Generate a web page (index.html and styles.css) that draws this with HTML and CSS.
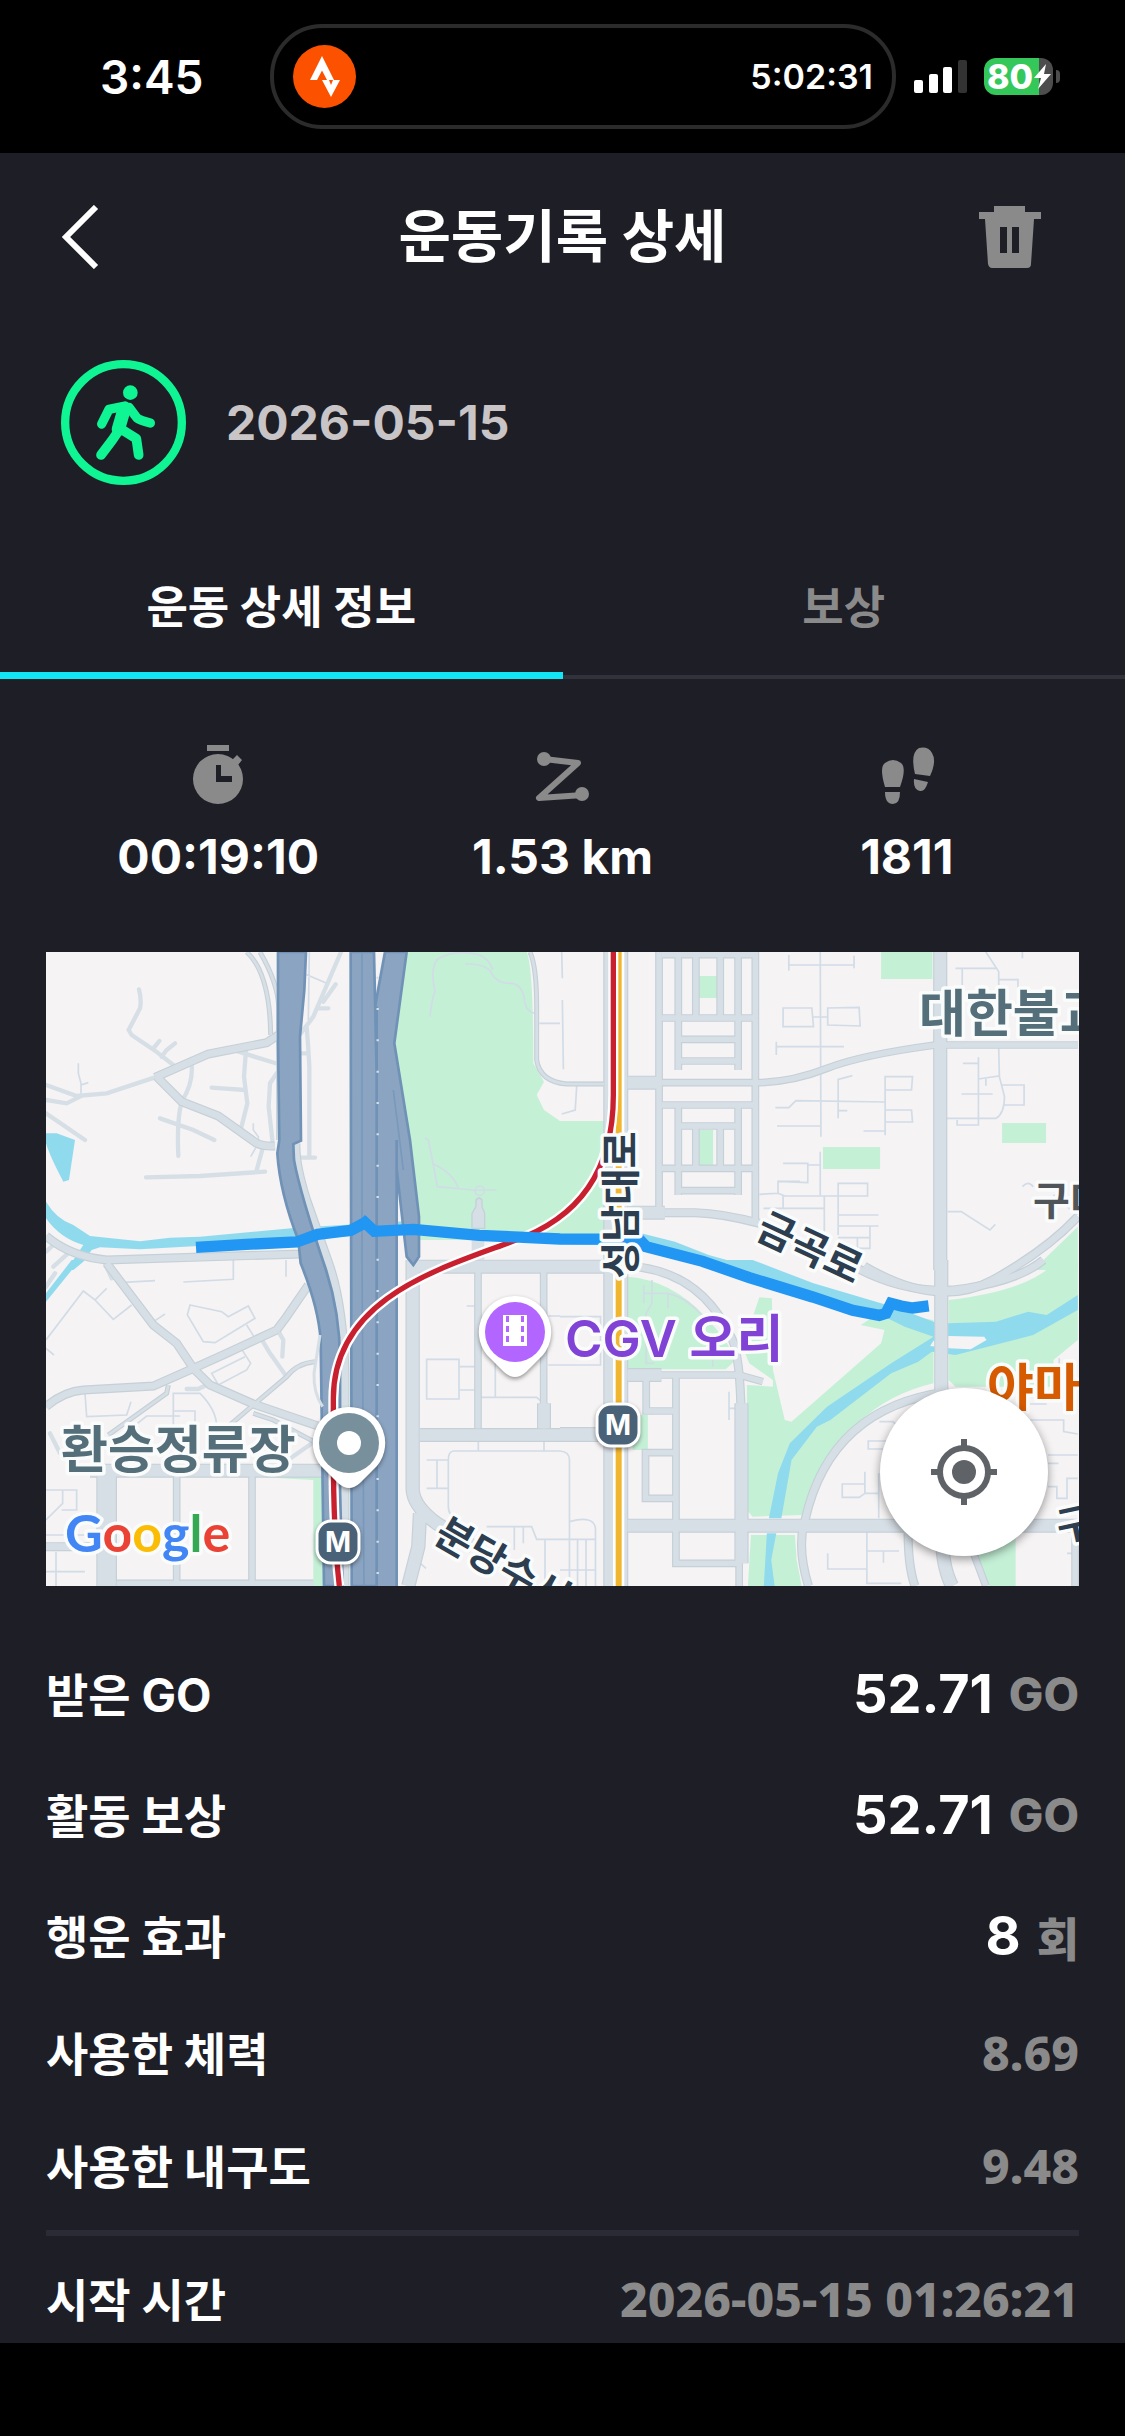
FILE: index.html
```html
<!DOCTYPE html>
<html lang="ko">
<head>
<meta charset="utf-8">
<meta name="viewport" content="width=device-width, initial-scale=1">
<title>운동기록 상세</title>
<link rel="stylesheet" href="styles.css">
</head>
<body>
<div class="status">
  <span class="clock">3:45</span>
  <div class="island">
    <svg class="strava" viewBox="0 0 63 63" aria-hidden="true"><circle cx="31.500" cy="31.500" r="31.500" fill="#fc5200"/><path d="M29 11 41 35H34L29 25.500 24 35H17ZM29 35h7l2 5 2-5h7L38 52Z" fill="#fff"/></svg>
    <span class="timer">5:02:31</span>
  </div>
  <svg class="signal" viewBox="0 0 54 34" aria-hidden="true"><g fill="#fff"><rect y="20" width="9" height="13" rx="2"/><rect x="15" y="14" width="9" height="19" rx="2"/><rect x="29" y="7" width="9" height="26" rx="2"/></g><rect x="44" width="9" height="33" rx="2" fill="#333"/></svg>
  <div class="battery">
    <span class="level">80</span>
    <svg class="bolt" viewBox="0 0 17 25" aria-hidden="true"><path d="M12 0 0 14H7L4 25 17 10H10Z" fill="#fff"/></svg>
  </div>
</div>

<main class="app">
  <header class="bar">
    <button class="icon-btn" type="button" aria-label="뒤로"><svg width="38" height="64" viewBox="0 0 38 64"><path d="M35 2 5 32 35 62" fill="none" stroke="#fff" stroke-width="6"/></svg></button>
    <h1 class="title">운동기록 상세</h1>
    <button class="icon-btn icon-end" type="button" aria-label="삭제"><svg width="62" height="62" viewBox="0 0 62 62"><path fill="#8a8a8a" fill-rule="evenodd" d="M15 0H46V6H62V13H55L52 58Q52 62 48 62H13Q10 62 9 58L6 13H0V6H15ZM21 21V47H28V21ZM33 21V47H40V21Z"/></svg></button>
  </header>

  <section class="activity">
    <svg width="125" height="125" viewBox="0 0 375 375" aria-hidden="true">
      <circle cx="187.500" cy="187.500" r="175" fill="none" stroke="#0ff594" stroke-width="25"/>
      <circle cx="208" cy="98" r="22" fill="#0ff594"/>
      <g fill="none" stroke="#0ff594" stroke-linecap="round" stroke-linejoin="round"><path d="M122 192 144 148 192 138M204 142 228 174Q236 181 268 189" stroke-width="28"/><path d="M190 146 172 208" stroke-width="40"/><path d="M176 208 154 240 120 285" stroke-width="29"/><path d="M178 206 226 236 233 285" stroke-width="29"/></g>
    </svg>
    <time class="date" datetime="2026-05-15">2026-05-15</time>
  </section>

  <nav class="tabs">
    <button class="tab tab-on" type="button">운동 상세 정보</button>
    <button class="tab" type="button">보상</button>
  </nav>

  <section class="stats">
    <div class="stat">
      <svg width="60" height="60" viewBox="0 0 60 60" aria-hidden="true"><g fill="#8a8a8a"><path d="M19 0H41V6H19ZM44 15 49 10 54 15 50 20Z"/><path fill-rule="evenodd" d="M30 9A25 25 0 1 1 30 59A25 25 0 1 1 30 9ZM28 20V37H44V31H33V20Z"/></g></svg>
      <span class="stat-value">00:19:10</span>
    </div>
    <div class="stat">
      <svg width="60" height="60" viewBox="0 0 60 60" aria-hidden="true"><g fill="none" stroke="#8a8a8a" stroke-width="6" stroke-linejoin="round"><path d="M12 14 46 18 7 53 51 50"/></g><circle cx="12" cy="14" r="7" fill="#8a8a8a"/><circle cx="50" cy="49" r="7" fill="#8a8a8a"/></svg>
      <span class="stat-value">1.53 km</span>
    </div>
    <div class="stat">
      <svg width="60" height="60" viewBox="0 0 60 60" aria-hidden="true"><g fill="#8a8a8a"><path d="M8 42Q2 22 8 18 16 12 24 18 30 23 23 42ZM8 47H23Q23 59 16 59 8 59 8 47ZM38 29Q33 8 42 3 51 1 55 8 60 16 53 31ZM37 34 51 37Q48 47 43 46 36 45 37 34Z"/></g></svg>
      <span class="stat-value">1811</span>
    </div>
  </section>

  <section class="map" aria-label="운동 경로">
    <svg class="map-art" viewBox="0 0 1033 634">
      <defs>
        <g id="wide-roads">
          <g transform="translate(-18 -36)">
            <path d="M345 412 505 342 680 308 715 285M350 410 425 485 535 528 650 610Q670 620 705 618M18 888Q90 950 200 960L780 942 795 925" class="w22"/>
            <path d="M620 36Q690 100 692 285M660 36Q714 130 716 200V600" class="w12"/><path d="M768 610Q765 670 800 780L870 980Q910 1100 915 1300V1938" class="w22"/>
            <path d="M1470 36Q1490 80 1490 200V360Q1500 425 1580 432H1692" class="w12"/>
          </g>
          <g transform="translate(-18 924)">
            <path d="M200 10 340 195 410 250 460 325 510 375 640 432 840 500M18 440Q70 395 130 390L340 378 460 325 560 280 710 210M710 210 740 170 805 75M18 860H190" class="w22"/>
            <path d="M150 632H850" class="w36"/><path d="M200 640V978" class="w50"/><path d="M410 640V978M636 640V978M230 970H820" class="w18"/>
            <path d="M1118 0V690Q1122 740 1190 790L1300 860M1140 760 1135 860 1105 978" class="w28"/><path d="M1105 20H1700M1140 525H1700" class="w36"/><path d="M1314 30V505M1511 30V505" class="w18"/><path d="M1512 430V505" class="w36"/>
            <path d="M205 525 380 400 385 375M540 520 740 350Q770 310 825 305M640 460 700 480 850 560" class="w12"/>
          </g>
          <g transform="translate(1542 -36) scale(1.014 1)">
            <path d="M293 36V820M578 36V850" class="w18"/><path d="M165 36V990" class="w70"/>
            <path d="M1125 36V990" class="w36"/><path d="M300 44H580M300 234H580M350 44V390M527 44V390M350 363H527M350 298H527M402 44V230M474 44V230M300 428H590Q690 425 790 385T1110 315H1532M300 495H578M350 495V765M527 495V765M350 558H527M402 560V685M474 560V685M300 685H578M350 752H527" class="w18"/>
            <path d="M200 428H300M200 818H310" class="w36"/><path d="M310 818H400Q480 820 590 850M900 978Q1120 1110 1280 1020T1532 830" class="w22"/>
          </g>
          <g transform="translate(1542 924) scale(1.014 1)">
            <path d="M165 0V978" class="w70"/><path d="M0 22H240Q420 50 500 220 530 260 535 430M880 25Q1040 110 1200 85T1430 0M1150 395Q800 440 725 780 700 860 735 978M1030 820Q1030 920 1050 978" class="w22"/>
            <path d="M1128 0V400M537 430V910M200 797H1532M0 522H130M200 345H300M1130 820Q1130 920 1160 978" class="w36"/>
            <path d="M200 345H530L600 365M343 345V910H530V978M255 345V453H343M343 578H253V715H343M1524 820V978M1220 870 1260 978" class="w18"/>
          </g>
        </g>
      </defs>
      <rect width="1033" height="634" fill="#f5f3f4"/>
      <g class="third">
        <g class="green">
          <path transform="translate(-18 -36)" d="M1100 36H1460Q1480 80 1480 370L1512 425 1490 465 1512 510 1560 543H1692V900H1140L1120 660 1065 320Z"/>
          <path transform="translate(-18 924)" d="M645 650H850V978H820V660Z"/>
          <path transform="translate(1542 -36) scale(1.014 1)" d="M407 108H468V174H407ZM410 570H453V675H410ZM950 36H1102V117H950ZM778 621H947V687H778ZM1308 549H1438V609H1308ZM1532 860 1400 990H1532Z"/>
          <path transform="translate(1542 924) scale(1.014 1)" d="M200 50Q330 60 430 170T510 310L490 328H200ZM215 465H260V570H215ZM590 112 627 115 630 330 665 480 685 485 950 250 960 210 890 195 950 155 1105 180V370Q850 430 740 710L715 765 570 770 553 750V375L630 380V360L560 310 540 260ZM1150 120Q1400 90 1470 0H1532V240L1460 300V380H1170L1150 360ZM565 825H695L700 900 715 978H556ZM1230 870 1348 830V978H1270Z"/>
        </g>
        <g class="water">
          <path transform="translate(-18 -36)" d="M18 580 50 580 105 600 87 720 70 725Q30 650 18 610ZM18 785Q50 838 100 855L150 888 300 904 390 893 480 890 770 863 1120 842V875L700 905 300 928 180 922 155 930 130 965 100 990H80L120 930 130 915Q60 895 18 835Z"/>
          <path transform="translate(-18 924)" d="M95 0H120L18 125V100Z"/>
          <path transform="translate(1542 -36) scale(1.014 1)" d="M240 880 340 905 440 945 620 995H480L240 910Z"/>
          <path transform="translate(1542 924) scale(1.014 1)" d="M440 0H570L750 70 1000 145 1105 185 1150 190 1290 185 1385 155 1440 165 1532 105V150L1400 225 1170 285 1100 275 1060 305 980 340 800 480 760 500 685 600 655 775H618L645 640 680 550 790 440 980 310 1105 230 1020 200 930 155ZM612 820H640L625 900 635 978H603Z"/>
          <path transform="translate(1542 924) scale(1.014 1)" d="M1150 228 1255 230 1262 240 1215 268 1150 265 1095 258 1105 242Z" fill="#f5f3f4"/>
        </g>
        <g fill="none" stroke="#d1dce6" stroke-width="5">
          <g transform="translate(-18 -36)"><path d="M115 370V400L123 430V465M123 435 145 428M580 960V1018L430 1026M738 960V1010M790 100 860 130M808 36 805 240M1170 230Q1175 180 1185 155 1170 90 1190 60 1240 25 1320 45 1350 60 1358 90M1275 72Q1340 70 1355 100 1370 130 1410 130 1450 130 1455 190 1460 215 1490 222M1498 250H1560M1155 594 1165 600 1180 675 1192 740 1300 750H1370M1180 672Q1240 700 1255 745M640 550V570L655 590V610L632 650"/><circle cx="1319" cy="752" r="14"/></g>
          <path transform="translate(-18 924)" d="M18 240 130 93 165 120 200 85M165 120 220 178 275 135M250 67 345 62M18 265 42 285M345 182 375 162M450 135 545 155 565 170 625 138 645 175 525 248 490 245 442 165ZM600 260 632 310 620 330 535 375 515 340 615 290M620 195 645 235M135 400 140 470 260 465 273 425M400 520V400H480Q530 450 530 500M400 453H465V490M280 500 320 468H420M18 690H110V750H65M68 690V730L18 780M18 825H165M48 875V978M18 935H135M1160 298H1257V417H1160ZM1257 320H1305M1257 390H1305M1366 300V410M1314 412H1490L1505 425M1160 600H1225M1191 600V685M1160 685H1225M1560 573H1240Q1225 575 1225 600V740Q1225 770 1260 780M1315 540V573M1512 540V573M1340 800H1475L1490 838H1560M1423 800V870M1450 800V850M1515 838V978M1135 905 1158 925M1280 138H1305M1525 168H1560M1525 315H1560"/>
          <path transform="translate(1542 -36) scale(1.014 1)" d="M5 36 7 115M7 180 10 388M0 428H130M50 430 45 510 5 522M677 45V92M677 75H870M870 47V85M770 36 772 590M640 305V345M640 320H840M660 204H745L750 260H660ZM792 204 885 202 888 258 792 255ZM750 231H790M637 503H677L698 482 962 486M823 535V418L865 407M823 512H850M962 586V410H1043L1040 450H962M962 510H1040L1043 546H962M898 573H962M642 558H772M770 635V765M660 670H733V728L645 724V760L590 763M645 724H710M645 760 665 768H910V730H823V885M660 768V805M602 805H780M782 768V890M823 825H942M823 858H942M917 860V925H880V895M823 893H915M1170 85H1290M1190 85V135M1260 36 1298 95V135M1298 119H1355V150M1368 36V55M1298 325 1300 410 1315 470Q1315 520 1290 535H1145M1238 352V555H1175V540M1192 370H1238M1188 462H1280M1238 417 1298 408M1260 417V437M1308 435H1373V495H1315M1147 815H1187L1272 870 1288 853M1368 740Q1385 720 1400 740M1460 765 1530 825M733 675H770"/>
          <path transform="translate(1542 924) scale(1.014 1)" d="M0 170H120V315H0M0 573Q28 575 28 600V978M28 785Q100 765 105 805V978M0 838H105M52 838V978M77 838V978M0 930H105M248 75V130M248 100H320V145M320 100Q370 110 420 165M272 60V130L255 160V310H280M452 290V320M500 395V480M500 445H520M945 485H985L1000 500M990 543H912V567H990M902 635V700L885 712H835V672H902M902 700H945M943 640V775M908 815V970H1010M908 873H1003M957 873V908M792 880V927H908M1390 480H1490V515L1532 522M1390 432H1440M1444 585H1532M1444 610H1475M1444 680H1470V715H1500V655H1532M1500 880H1532M1477 295V320"/>
        </g>
        <g class="thin"><path transform="translate(-18 -36)" d="M297 148Q305 180 300 205L266 270 275 285 345 332 400 375M340 325 358 303M365 350 380 330 405 310M580 330 650 352 715 372M618 330 612 410 622 490 602 570M455 375Q460 430 425 485 410 540 415 648M360 535 460 570 523 600M515 443 615 450M710 400 690 430 686 500 697 600M318 712 480 708 675 695M650 690 668 625M18 435 110 468 200 460 345 412M18 480 80 490 120 470M18 520 135 600M903 36 820 230 775 290M800 260Q805 320 808 380V650M780 653H825M850 185 887 133M835 205H865M778 340H805M40 980 90 935M190 960 215 1015M18 935 40 915M18 1040 45 1000"/><path transform="translate(-18 924)" d="M660 230 690 280 740 350M710 205 730 240 727 290M440 387H475L505 372M30 520 60 580 160 640M730 610 830 540"/></g>
        <g class="case"><use href="#wide-roads"/></g><g class="fill"><use href="#wide-roads"/></g>
        <path transform="translate(-18 -36)" d="M1314 870V960" stroke="#d7dfe6" stroke-width="38" fill="none"/>
        <path transform="translate(-18 -36)" d="M1296 865V820L1308 800V780Q1318 768 1326 780V800L1334 820V865Z" fill="#d7dfe6" stroke="#c5d0d7" stroke-width="4"/>
        <g transform="translate(-18 -36)" fill="#8ba4c1" stroke="#6f92b6" stroke-width="8">
          <path d="M714 36H798L793 150 780 290 783 602 760 612 762 660Q780 760 858 990 900 1120 900 1260V1650L908 1938H852L842 1200Q835 1100 782 970L775 900Q720 760 712 640L718 600 714 300Z"/>
          <path d="M1035 36H1100L1063 310 1110 600 1137 830V950L1120 975 1100 950 1060 600 1010 480 1005 200Z"/>
          <path d="M1008 200 1035 300 1070 600V1938H1010Z" stroke="none"/><path d="M1070 600V1938M1010 200V1938" fill="none"/><path d="M932 36H1002L1010 400V1938H935Z"/>
        </g>
        <path transform="translate(-18 -36)" d="M966 40V960L972 1938M1060 450 1090 690" stroke="#7899bc" stroke-width="5" fill="none"/>
        <path transform="translate(-18 -36)" d="M1013 110V1930" stroke="#d7dfe6" stroke-width="7" stroke-dasharray="6 88" fill="none"/>
        <path transform="translate(-18 924)" d="M840 225 822 340Q820 400 848 440" stroke="#d7dfe6" stroke-width="9" fill="none"/>
        <path d="M1718 0V1902" stroke="#fff" stroke-width="34"/><path d="M1718 0V1902" stroke="#f0b62f" stroke-width="18"/>
        <g fill="none"><path d="M1702 0V430C1702 620 1630 790 1400 868C1180 950 862 1040 862 1340V1500Q862 1740 880 1902" stroke="#fff" stroke-width="30"/><path d="M1702 0V430C1702 620 1630 790 1400 868C1180 950 862 1040 862 1340V1500Q862 1740 880 1902" stroke="#c8202f" stroke-width="16"/></g>
        <path d="M450 886 600 877 752 870 815 847 915 835 957 812 985 838 1102 832 1300 850 1542 861 1780 862 1800 884 1970 928 2110 977 2300 1035 2420 1075 2500 1090 2520 1084 2535 1054 2565 1062 2600 1068 2648 1062" fill="none" stroke="#2196f3" stroke-width="34"/>
        <path d="M930 818 957 789 984 820Z" fill="#2196f3"/>
      </g>

      <g class="place">
        <text x="873" y="80">대한불교</text><text x="15" y="516">환승정류장</text>
        <text class="violet" x="519" y="405">CGV 오리</text><text class="orange" x="941" y="454">야마</text>
      </g>
      <g class="street">
        <text transform="translate(575 253) rotate(-90)" y="14">성남대로</text>
        <text transform="translate(764 296) rotate(25)" y="14">금곡로</text>
        <text transform="translate(391 580) rotate(30)" y="10" class="from-start">분당수서로</text>
        <text transform="translate(1014 590) rotate(-12)" class="from-start">구</text>
        <text x="987" y="263" class="from-start gray">구미</text>
      </g>
      <g class="logo"><text x="19" y="600"><tspan fill="#4285f4">G</tspan><tspan fill="#ea4335">o</tspan><tspan fill="#fbbc05">o</tspan><tspan fill="#4285f4">g</tspan><tspan fill="#34a853">l</tspan><tspan fill="#ea4335">e</tspan></text></g>

      <g class="pin">
        <path d="M469 344A36 36 0 0 1 493 407L480 420Q469 430 458 420L445 407A36 36 0 0 1 469 344Z" fill="#fff"/><circle cx="469" cy="380" r="30" fill="#b266ff"/>
        <path d="M457 363H481V394H457Z" fill="#fff"/><path d="M461.500 364V394M476.500 364V394" stroke="#b266ff" stroke-width="3" stroke-dasharray="6 4"/>
        <path d="M303 455A36 36 0 0 1 327 518L314 531Q303 541 292 531L279 518A36 36 0 0 1 303 455Z" fill="#fff"/><circle cx="303" cy="491" r="30" fill="#78909c"/><circle cx="303" cy="491" r="12" fill="#fff"/>
        <rect x="271" y="569" width="42" height="42" rx="14" fill="#4a6278" stroke="#fff" stroke-width="3"/><rect x="551" y="452" width="42" height="42" rx="14" fill="#4a6278" stroke="#fff" stroke-width="3"/>
      </g>
      <g class="metro"><text x="292" y="600">M</text><text x="572" y="483">M</text></g>
    </svg>
    <button class="locate" type="button" aria-label="현재 위치"><svg width="66" height="66" viewBox="0 0 66 66"><circle cx="33" cy="33" r="24" fill="none" stroke="#5f6368" stroke-width="6"/><circle cx="33" cy="33" r="12" fill="#5f6368"/><path d="M33 0V10M33 56V66M0 33H10M56 33H66" stroke="#5f6368" stroke-width="6"/></svg></button>
  </section>

  <dl class="rows">
    <div class="row"><dt>받은 GO</dt><dd><strong>52.71</strong> <span class="unit">GO</span></dd></div>
    <div class="row"><dt>활동 보상</dt><dd><strong>52.71</strong> <span class="unit">GO</span></dd></div>
    <div class="row"><dt>행운 효과</dt><dd><strong>8</strong> <span class="unit">회</span></dd></div>
    <div class="row row-small"><dt>사용한 체력</dt><dd>8.69</dd></div>
    <div class="row row-small"><dt>사용한 내구도</dt><dd>9.48</dd></div>
  </dl>
  <dl class="rows rows-time">
    <div class="row row-last"><dt>시작 시간</dt><dd>2026-05-15 01:26:21</dd></div>
  </dl>
</main>
</body>
</html>
```
FILE: styles.css
```css
* { box-sizing: border-box; }
body {
  margin: 0;
  min-height: 100vh;
  background: #000;
  color: #fff;
  font-family: Inter, "Noto Sans CJK KR", sans-serif;
  font-weight: 700;
}
button { padding: 0; border: 0; background: none; color: inherit; font: inherit; }
svg { display: block; flex: none; }

.status { display: flex; align-items: center; height: 153px; padding: 0 72px 0 100px; }
.clock { width: 170px; font-size: 46px; font-weight: 600; }
.island {
  display: flex; align-items: center; justify-content: space-between; flex: 1;
  height: 105px; margin-right: 18px; padding: 0 19px;
  border: 4px solid #2b2b2b; border-radius: 52px;
}
.strava { width: 63px; height: 63px; }
.timer { font-size: 34px; font-weight: 600; }
.signal { width: 54px; height: 34px; }
.battery {
  position: relative; display: flex; align-items: center; width: 69px; height: 37px;
  margin-left: 16px; border-radius: 12px; padding-left: 3px;
  background: linear-gradient(90deg, #34c759 55px, #4d4d4d 55px);
}
.battery::after {
  content: ""; position: absolute; right: -7px; top: 12px; width: 4px; height: 13px;
  border-radius: 0 4px 4px 0; background: #4d4d4d;
}
.level { font-size: 34px; font-weight: 800; }
.bolt { position: absolute; right: 2px; top: 6px; width: 17px; height: 25px; }

.app { overflow: hidden; background: #1e1e26; }
.bar { display: grid; grid-template-columns: 1fr auto 1fr; align-items: center; height: 168px; padding: 0 61px; }
.icon-btn { width: 62px; }
.icon-end { justify-self: end; margin-right: 23px; }
.title { margin: 0; font-size: 57px; line-height: 72px; font-weight: 700; }
.activity { display: flex; align-items: center; gap: 40px; height: 202px; padding: 0 61px; }
.date { color: #c9c4c6; font-size: 48px; }

.tabs { display: grid; grid-template-columns: 1fr 1fr; height: 156px; box-shadow: inset 0 -4px #32323c; }
.tab { padding-top: 14px; border-bottom: 7px solid transparent; color: #8a8a8a; font-size: 45px; }
.tab-on { border-color: #12e6f6; color: #fff; }

.stats { display: grid; grid-template-columns: repeat(3, 1fr); padding: 66px 46px 0; }
.stat { display: flex; flex-direction: column; align-items: center; gap: 22px; }
.stat-value { font-size: 48px; line-height: 60px; }

.map { position: relative; margin: 65px 46px 49px; }
.map-art { width: 100%; height: auto; overflow: hidden; }
.locate {
  position: absolute; right: 31px; bottom: 30px; width: 168px; height: 168px;
  display: flex; align-items: center; justify-content: center;
  border-radius: 50%; background: #fff; box-shadow: 0 3px 10px rgb(0 0 0 / 40%);
}
.third { transform: scale(0.33333); }
.green { fill: #c4f0d6; }
.water { fill: #90daee; }
.thin { fill: none; stroke: #d7dfe6; stroke-width: 13px; stroke-linecap: round; }
.case { fill: none; stroke: #c5d0d7; --extra: 0px; }
.fill { fill: none; stroke: #d7dfe6; --extra: 7px; }
.w12 { stroke-width: calc(15px - var(--extra)); }
.w18 { stroke-width: calc(23px - var(--extra)); }
.w22 { stroke-width: calc(27px - var(--extra)); }
.w28 { stroke-width: calc(43px - var(--extra)); }
.w36 { stroke-width: calc(42px - var(--extra)); }
.w50 { stroke-width: calc(62px - var(--extra)); }
.w70 { stroke-width: calc(74px - var(--extra)); }
.place, .street, .logo { paint-order: stroke; stroke: #fafcfc; stroke-width: 7px; stroke-linejoin: round; font-weight: 600; }
.place { font-size: 51px; fill: #546e7a; }
.violet { fill: #8142d6; }
.orange { fill: #d65a00; }
.street { font-size: 40px; fill: #2c3e50; text-anchor: middle; }
.from-start { text-anchor: start; }
.gray { fill: #50555a; }
.logo { font-family: Lato, sans-serif; font-size: 52px; font-weight: 700; }
.pin { filter: drop-shadow(0 2px 2px rgb(0 0 0 / 40%)); }
.metro { font-size: 28px; fill: #fff; text-anchor: middle; }

.rows { margin: 0 46px; padding-bottom: 6px; font-size: 46px; }
.row { display: flex; align-items: center; justify-content: space-between; height: 121px; padding-bottom: 4px; }
.row-small { height: 113px; }
.row-last { height: 85px; }
.row dt { padding-bottom: 4px; }
.row dd { display: flex; align-items: center; gap: 16px; margin: 0; color: #8a8a8a; font-family: "Noto Sans", sans-serif; font-size: 48px; font-weight: 800; }
.row strong { color: #fff; font-family: Inter, sans-serif; font-size: 54px; font-weight: 700; }
.row .unit { font-family: Inter, "Noto Sans CJK KR", sans-serif; font-size: 46px; }
.rows-time { padding-top: 22px; padding-bottom: 0; border-top: 6px solid #2b2b35; }
```
